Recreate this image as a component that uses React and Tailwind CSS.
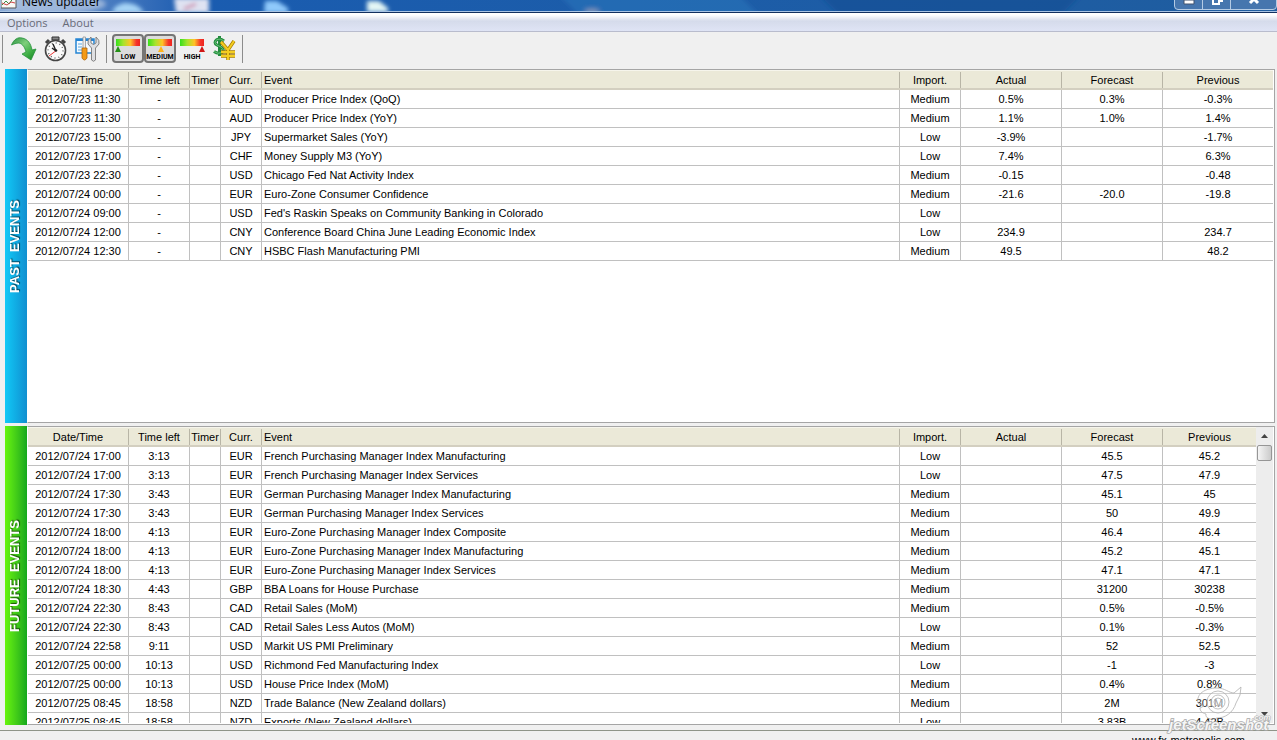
const PAST_EVENTS = [
  ['2012/07/23 11:30', '-', 'AUD', 'Producer Price Index (QoQ)', 'Medium', '0.5%', '0.3%', '-0.3%'],
  ['2012/07/23 11:30', '-', 'AUD', 'Producer Price Index (YoY)', 'Medium', '1.1%', '1.0%', '1.4%'],
  ['2012/07/23 15:00', '-', 'JPY', 'Supermarket Sales (YoY)', 'Low', '-3.9%', '', '-1.7%'],
  ['2012/07/23 17:00', '-', 'CHF', 'Money Supply M3 (YoY)', 'Low', '7.4%', '', '6.3%'],
  ['2012/07/23 22:30', '-', 'USD', 'Chicago Fed Nat Activity Index', 'Medium', '-0.15', '', '-0.48'],
  ['2012/07/24 00:00', '-', 'EUR', 'Euro-Zone Consumer Confidence', 'Medium', '-21.6', '-20.0', '-19.8'],
  ['2012/07/24 09:00', '-', 'USD', "Fed's Raskin Speaks on Community Banking in Colorado", 'Low', '', '', ''],
  ['2012/07/24 12:00', '-', 'CNY', 'Conference Board China June Leading Economic Index', 'Low', '234.9', '', '234.7'],
  ['2012/07/24 12:30', '-', 'CNY', 'HSBC Flash Manufacturing PMI', 'Medium', '49.5', '', '48.2'],
]

const FUTURE_EVENTS = [
  ['2012/07/24 17:00', '3:13', 'EUR', 'French Purchasing Manager Index Manufacturing', 'Low', '', '45.5', '45.2'],
  ['2012/07/24 17:00', '3:13', 'EUR', 'French Purchasing Manager Index Services', 'Low', '', '47.5', '47.9'],
  ['2012/07/24 17:30', '3:43', 'EUR', 'German Purchasing Manager Index Manufacturing', 'Medium', '', '45.1', '45'],
  ['2012/07/24 17:30', '3:43', 'EUR', 'German Purchasing Manager Index Services', 'Medium', '', '50', '49.9'],
  ['2012/07/24 18:00', '4:13', 'EUR', 'Euro-Zone Purchasing Manager Index Composite', 'Medium', '', '46.4', '46.4'],
  ['2012/07/24 18:00', '4:13', 'EUR', 'Euro-Zone Purchasing Manager Index Manufacturing', 'Medium', '', '45.2', '45.1'],
  ['2012/07/24 18:00', '4:13', 'EUR', 'Euro-Zone Purchasing Manager Index Services', 'Medium', '', '47.1', '47.1'],
  ['2012/07/24 18:30', '4:43', 'GBP', 'BBA Loans for House Purchase', 'Medium', '', '31200', '30238'],
  ['2012/07/24 22:30', '8:43', 'CAD', 'Retail Sales (MoM)', 'Medium', '', '0.5%', '-0.5%'],
  ['2012/07/24 22:30', '8:43', 'CAD', 'Retail Sales Less Autos (MoM)', 'Low', '', '0.1%', '-0.3%'],
  ['2012/07/24 22:58', '9:11', 'USD', 'Markit US PMI Preliminary', 'Medium', '', '52', '52.5'],
  ['2012/07/25 00:00', '10:13', 'USD', 'Richmond Fed Manufacturing Index', 'Low', '', '-1', '-3'],
  ['2012/07/25 00:00', '10:13', 'USD', 'House Price Index (MoM)', 'Medium', '', '0.4%', '0.8%'],
  ['2012/07/25 08:45', '18:58', 'NZD', 'Trade Balance (New Zealand dollars)', 'Medium', '', '2M', '301M'],
  ['2012/07/25 08:45', '18:58', 'NZD', 'Exports (New Zealand dollars)', 'Low', '', '3.83B', '4.42B'],
]

const COLUMNS = ['Date/Time', 'Time left', 'Timer', 'Curr.', 'Event', 'Import.', 'Actual', 'Forecast', 'Previous']

const TitleBar = () => (
  <header className="relative h-[13px] shrink-0 overflow-hidden border-b border-[#12305f] bg-linear-to-r from-[#7fa3d4] via-[#1a5cb0] via-15% to-[#1f5d9f]">
    {/* Desktop showing through the glass */}
    <svg className="absolute inset-0 h-full w-full" aria-hidden="true">
      <defs>
        <filter id="soft" x="-50%" y="-50%" width="200%" height="200%">
          <feGaussianBlur stdDeviation="2" />
        </filter>
      </defs>
      <g filter="url(#soft)">
        <ellipse cx="50" cy="4" rx="56" ry="10" fill="#b5c8e2" opacity="0.7" />
        <path d="M112 13q2-8 12-10q14-1 20 10z" fill="#a6d4f6" />
        <path d="M174-2h35v15h-33z" fill="#dfe3f2" />
        <path d="M184 9l12-5" stroke="#c45c8c" strokeWidth="2" />
        <path d="M265 1h12l11 7v5h-24z" fill="#8fc9fb" />
        <path d="M367 1h12l9 7v4h-21z" fill="#e3f6f5" />
        <ellipse cx="592" cy="11" rx="8" ry="3" fill="#c7a9b0" />
        <path d="M560-4h180l20 20h-180z" fill="#2d78bd" opacity="0.5" />
        <path d="M820-4h260l-20 20h-220z" fill="#0f4c93" opacity="0.6" />
      </g>
    </svg>
    <div className="relative flex h-3 items-end justify-between border-b border-[#a9c4e4] pb-px">
      <div className="flex items-end gap-[5px] pl-px">
        <svg className="h-4 w-4" viewBox="0 0 16 16" aria-hidden="true">
          <path d="M0 0h15v14H0z" fill="#f8f8f6" stroke="#555" />
          <path d="M1 11l4-4 3 3 5-7" fill="none" stroke="#3a8b46" />
          <path d="M1 9l5 2 4-3 4 1" fill="none" stroke="#c44" />
        </svg>
        <h1 className="font-['Open_Sans','Noto_Sans',sans-serif] text-xs leading-4 text-black">News updater</h1>
      </div>
      <div className="flex h-5 w-[103px] rounded-b border border-[#b4cbe4] bg-[#4676ae]">
        <button aria-label="Minimize" className="flex w-7 items-end justify-center border-r border-[#b4cbe4] pb-1">
          <svg className="h-3 w-3" viewBox="0 0 12 12"><path d="M1 7h10v4H1z" fill="#fff" stroke="#40536e" /></svg>
        </button>
        <button aria-label="Restore" className="flex w-7 items-end justify-center border-r border-[#b4cbe4] pb-1">
          <svg className="h-3 w-3" viewBox="0 0 12 12" fill="none" stroke="#fff" strokeWidth="2"><path d="M2 4h6v7H2zM5 1h6v7H9" /></svg>
        </button>
        <button aria-label="Close" className="flex flex-1 items-end justify-center pb-1">
          <svg className="h-3 w-3" viewBox="0 0 12 12" stroke="#fff" strokeWidth="3"><path d="M2 2l8 8M10 2l-8 8" /></svg>
        </button>
      </div>
    </div>
  </header>
)

const MenuBar = () => (
  <nav className="flex h-[19px] shrink-0 items-center gap-[15px] border-b border-[#b9bccd] bg-linear-to-b from-white from-10% via-[#d5dbeb] via-45% to-[#dfe4f5] pt-[2px] pl-[7px] font-['Open_Sans','Noto_Sans',sans-serif] text-[11px] leading-4 text-[#686b78]">
    <button>Options</button>
    <button>About</button>
  </nav>
)

const RefreshIcon = () => (
  <svg className="h-7 w-7" viewBox="0 0 28 28" aria-hidden="true">
    <defs>
      <linearGradient id="arrow" x1="0" y1="0" x2="1" y2="1">
        <stop offset="0" stopColor="#2c9140" />
        <stop offset="0.4" stopColor="#7fcf7c" />
        <stop offset="0.7" stopColor="#3fae45" />
        <stop offset="1" stopColor="#168020" />
      </linearGradient>
    </defs>
    <path d="M1.5 10C4 4 8 2 12 3c6 1 9 6 10 12l4-1-5 11-9-6 4-2c-1-4-3-8-7-9-3 0-5 1-7.5 2z" fill="url(#arrow)" stroke="#23903a" strokeWidth="0.8" strokeLinejoin="round" />
  </svg>
)

const StopwatchIcon = () => (
  <svg className="h-7 w-7" viewBox="0 0 28 28" aria-hidden="true">
    <path d="M10 2h7v3h-7z" fill="#888" stroke="#333" />
    <path d="M4 8l3-3M20 5l3 3" stroke="#444" strokeWidth="3" />
    <circle cx="13.5" cy="15.5" r="10" fill="#fbfbfb" stroke="#454545" strokeWidth="1.6" />
    <circle cx="13.5" cy="15.5" r="7.5" fill="none" stroke="#555" strokeWidth="1.5" strokeDasharray="0.9 3.027" />
    <path d="M14 16L11 9M14 16l-4-3" stroke="#222" strokeWidth="1.4" />
    <path d="M15 15l-8 6" stroke="#e33" />
    <circle cx="14" cy="15.5" r="1.3" fill="#222" />
  </svg>
)

const SettingsIcon = () => (
  <svg className="h-7 w-7" viewBox="0 0 28 28" aria-hidden="true">
    <path d="M2 4h18v14H2z" fill="#f4faff" stroke="#2585d4" strokeWidth="1.5" />
    <path d="M2 4h18v2H2z" fill="#2585d4" />
    <path d="M4 9h4M4 12h4M4 15h4" stroke="#5ca8df" />
    <path d="M9 2h2.5v12H9z" fill="#eee" stroke="#888" strokeWidth="0.7" />
    <path d="M8 13h5v10q-2.5 4-5 0z" fill="#f39a16" stroke="#ad660d" strokeWidth="0.8" />
    <path d="M17 2v6l2.5 1.5L22 8V2q4 3 3 7l-3.5 4v12q-2 2.5-4 0V13L14 9q-1-4 3-7z" fill="#dedfe2" stroke="#777" strokeWidth="0.9" />
  </svg>
)

const GaugeIcon = ({ label, pointer, color }) => (
  <svg className="h-6 w-7" viewBox="0 0 28 24" aria-hidden="true">
    <defs>
      <linearGradient id="gauge">
        <stop offset="0" stopColor="#36df1d" />
        <stop offset="0.3" stopColor="#a5e42c" />
        <stop offset="0.6" stopColor="#ffc326" />
        <stop offset="0.85" stopColor="#f5342b" />
        <stop offset="1" stopColor="#ed251d" />
      </linearGradient>
    </defs>
    <path d="M2 2h24v7H2z" fill="url(#gauge)" />
    <path d={pointer} fill={color} />
    <text x="14" y="22" textAnchor="middle" fontFamily="Roboto, sans-serif" fontSize="7" fontWeight="bold" fill="#000">{label}</text>
  </svg>
)

const CurrencyIcon = () => (
  <svg className="h-7 w-7" viewBox="0 0 28 28" aria-hidden="true">
    <path d="M14 6Q10 3 7 4.5q-4 3 0 5.5l4 2q4 3 1 5.5-4 2-8-1M9.5 1v20" fill="none" stroke="#238b3d" strokeWidth="3" />
    <path d="M14 6Q10 3 7 4.5q-4 3 0 5.5l4 2q4 3 1 5.5-4 2-8-1" fill="none" stroke="#67c477" />
    <path d="M11 7l7 8 6-9M18 15v10M11 17h14M11 21h14" fill="none" stroke="#a77c00" strokeWidth="3.5" />
    <path d="M11 7l7 8 6-9M18 15v10M11 17h14M11 21h14" fill="none" stroke="#f4cd20" strokeWidth="2" />
  </svg>
)

const Separator = () => <div className="h-7 w-px bg-[#8c8c8c]" />

const Toolbar = () => (
  <div className="flex h-[37px] shrink-0 items-center bg-[#f0f0f0] pb-1 pl-[2px]">
    <Separator />
    <div className="flex gap-1 pr-1 pl-[7px]">
      <button aria-label="Refresh"><RefreshIcon /></button>
      <button aria-label="Timer"><StopwatchIcon /></button>
      <button aria-label="Settings"><SettingsIcon /></button>
    </div>
    <Separator />
    <div className="flex items-center pr-1 pl-[5px]">
      <button aria-label="Low importance" aria-pressed="true" className="flex h-[29px] w-8 items-center justify-center rounded-sm border-2 border-[#757575] bg-[#dcdcdc]">
        <GaugeIcon label="LOW" pointer="M4 9l3 6H1z" color="#249016" />
      </button>
      <button aria-label="Medium importance" aria-pressed="true" className="flex h-[29px] w-8 items-center justify-center rounded-sm border-2 border-[#757575] bg-[#dcdcdc]">
        <GaugeIcon label="MEDIUM" pointer="M15 9l3 6h-6z" color="#ffb31a" />
      </button>
      <button aria-label="High importance" aria-pressed="false" className="flex h-[29px] w-8 items-center justify-center">
        <GaugeIcon label="HIGH" pointer="M24 9l3 6h-6z" color="#cf1716" />
      </button>
      <button aria-label="Currencies" className="ml-[2px]"><CurrencyIcon /></button>
    </div>
    <Separator />
  </div>
)

const EventTable = ({ events, scrolled }) => (
  <table className="w-full table-fixed border-separate border-spacing-0 text-[11px] leading-[18px] text-black">
    <colgroup>
      <col className="w-[101px]" />
      <col className="w-[61px]" />
      <col className="w-[31px]" />
      <col className="w-[41px]" />
      <col />
      <col className="w-[61px]" />
      <col className="w-[101px]" />
      <col className="w-[101px]" />
      <col className={scrolled ? 'w-[93px]' : 'w-[110px]'} />
    </colgroup>
    <thead>
      <tr>
        {COLUMNS.map((name) => (
          <th
            key={name}
            className={`h-5 border-t border-b-2 border-t-[#f6f5ec] border-b-[#d3cfc0] bg-[#ebe9d8] p-0 pt-px leading-4 font-normal ${name === 'Event' ? 'pl-[2px] text-left' : 'text-center'}`}
          >
            <div className={name === 'Previous' ? '' : 'border-r border-[#b8b5a6]'}>{name}</div>
          </th>
        ))}
      </tr>
    </thead>
    <tbody>
      {events.map(([date, left, currency, event, importance, actual, forecast, previous], i) => (
        <tr key={i} className="*:h-[19px] *:border-b *:border-[#c0c0c0] *:p-0 *:text-center *:not-last:border-r">
          <td>{date}</td>
          <td>{left}</td>
          <td></td>
          <td>{currency}</td>
          <td className="truncate pl-[2px]! text-left!">{event}</td>
          <td>{importance}</td>
          <td>{actual}</td>
          <td>{forecast}</td>
          <td>{previous}</td>
        </tr>
      ))}
    </tbody>
  </table>
)

const ScrollBar = () => (
  <div className="flex w-[17px] shrink-0 flex-col items-center bg-[#ededed]">
    <button aria-label="Scroll up" className="flex h-[18px] w-full items-center justify-center">
      <svg className="h-1 w-[7px]" viewBox="0 0 7 4"><path d="M0 4l3.5-4L7 4z" fill="#444" /></svg>
    </button>
    <div className="h-4 w-[15px] rounded-xs border border-[#969696] bg-linear-to-r from-[#f5f5f5] to-[#cbcbcb]" />
    <button aria-label="Scroll down" className="mt-auto flex h-[18px] w-full items-center justify-center">
      <svg className="h-1 w-[7px]" viewBox="0 0 7 4"><path d="M0 0l3.5 4L7 0z" fill="#444" /></svg>
    </button>
  </div>
)

const Panel = ({ title, tone, size, events, scrolled }) => (
  <section className={`flex min-h-0 ${size}`}>
    <div className={`flex w-[22px] shrink-0 items-center justify-center bg-linear-to-r pr-[2px] ${tone}`}>
      <h2 className="rotate-180 text-[13px] leading-4 font-bold whitespace-pre text-white [writing-mode:vertical-rl] text-shadow-[1px_1px_1px_#00000099]">
        {title}
      </h2>
    </div>
    <div className="flex min-w-0 flex-1 overflow-hidden border border-[#a5a5a5] border-l-white bg-white pr-px pb-px">
      <div className="min-w-0 flex-1 overflow-hidden">
        <EventTable events={events} scrolled={scrolled} />
      </div>
      {scrolled && <ScrollBar />}
    </div>
  </section>
)

const Watermark = () => (
  <svg className="pointer-events-none absolute right-0 bottom-0 h-[60px] w-[117px]" viewBox="0 0 117 60" aria-hidden="true">
    <g fill="#ffffff" fillOpacity="0.2" stroke="#b0b0b0" strokeWidth="0.8">
      <path d="M38 23C36 14 45 8 57 8c8 0 12 5 17 5l7-6-1 8-4 8c-3 10-11 15-19 15-6 3-12 0-11-4-4-1-6-3-6-6l4-2q-3 0-6-3z" />
      <circle cx="58" cy="22" r="11" />
      <circle cx="58" cy="22" r="7" />
      <circle cx="58" cy="22" r="4" />
    </g>
    <g fontFamily="Liberation Sans" fontWeight="bold" fontStyle="italic" fill="#f6f6f6" stroke="#a8a8a8" strokeWidth="1.5" paintOrder="stroke">
      <text x="9" y="50" fontSize="15">jetScreenshot</text>
      <text x="92" y="40" fontSize="8" strokeWidth="1">.com</text>
    </g>
  </svg>
)

const App = () => {
  return (
    <div className="relative flex h-screen flex-col overflow-hidden bg-[#f0f0f0] font-['Liberation_Sans',Arial,sans-serif]">
      <TitleBar />
      <MenuBar />
      <Toolbar />
      <main className="flex min-h-0 flex-1 flex-col gap-[3px] pr-[2px] pb-[5px] pl-[5px]">
        <Panel
          title="PAST  EVENTS"
          tone="from-[#12c9f7] to-[#118fd0]"
          size="flex-[354]"
          events={PAST_EVENTS}
        />
        <Panel
          title="FUTURE  EVENTS"
          tone="from-[#68f50c] to-[#12a81c]"
          size="flex-[299]"
          events={FUTURE_EVENTS}
          scrolled
        />
      </main>
      <footer className="h-[10px] shrink-0 overflow-hidden border-t border-[#8f9488] pt-px pr-8 text-right text-[11px] leading-4 text-black">
        www.fx-metropolis.com
      </footer>
      <Watermark />
    </div>
  )
}

export default App
